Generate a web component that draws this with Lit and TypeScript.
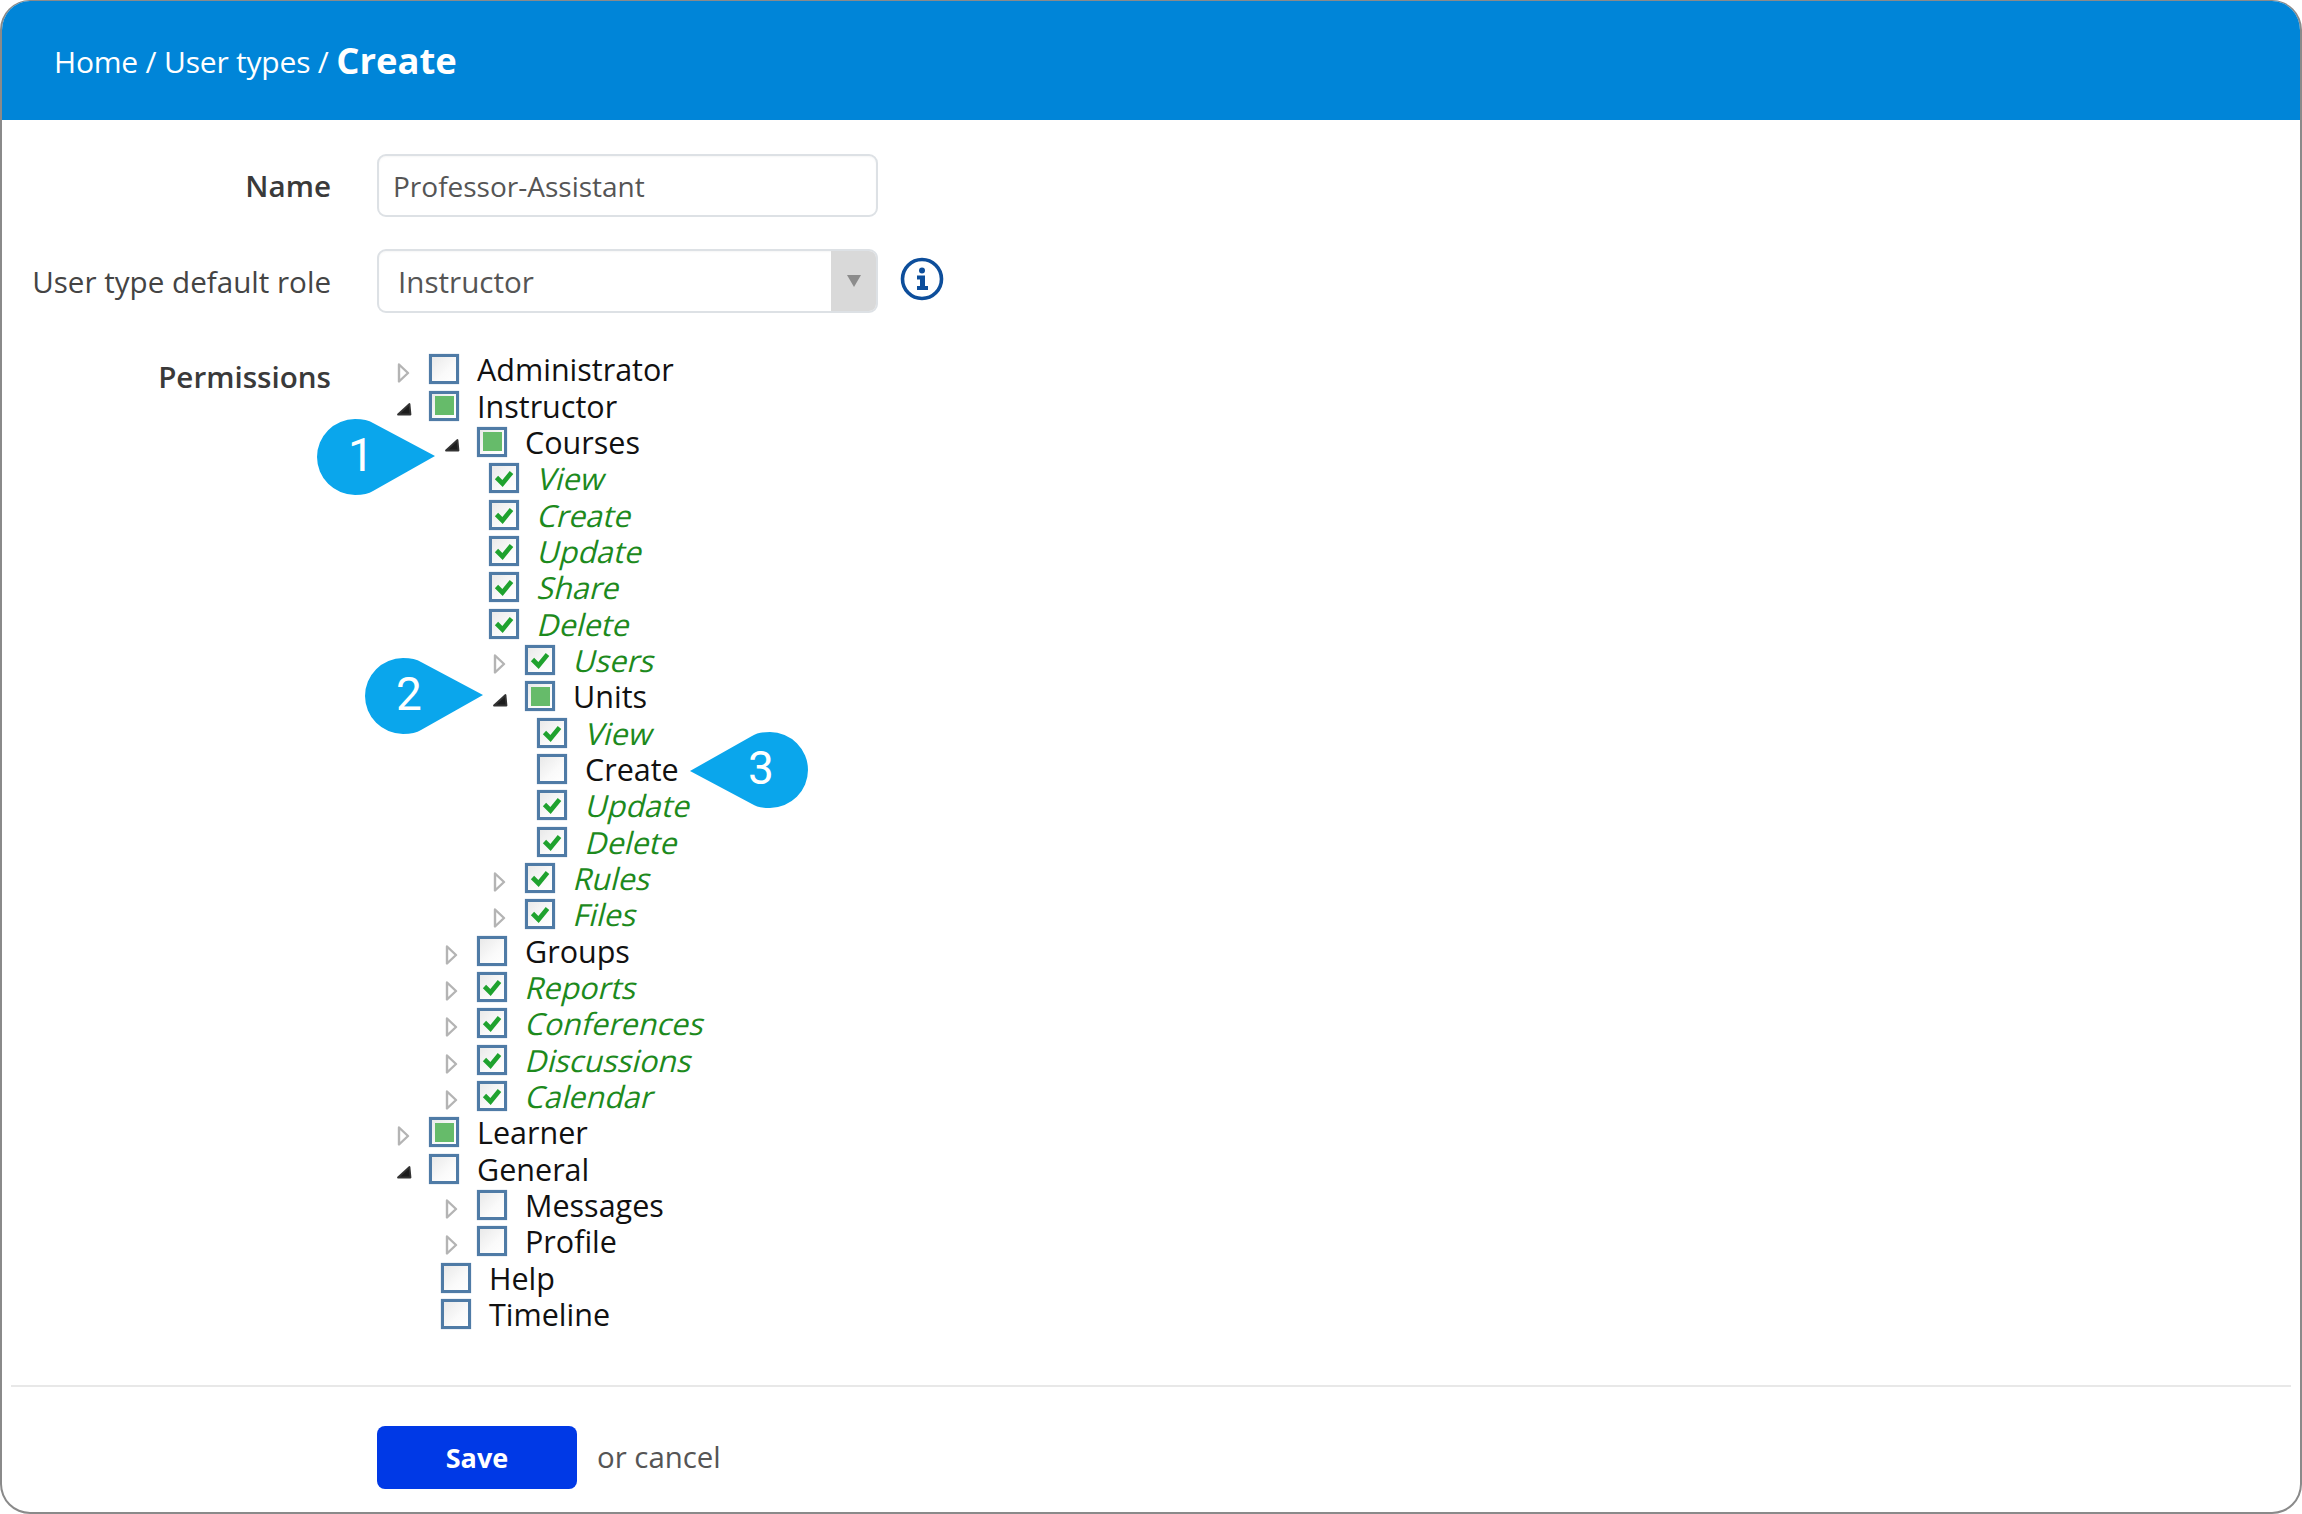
import { LitElement, html, css, svg, nothing } from "lit";
import { customElement } from "lit/decorators.js";

type State = "none" | "partial" | "checked";
interface Node {
  label: string;
  state: State;
  arrow?: "open" | "closed";
  kids?: Node[];
}

const leaf = (label: string, state: State = "checked"): Node => ({ label, state });
const closed = (label: string, state: State): Node => ({ label, state, arrow: "closed" });
const open = (label: string, state: State, kids: Node[]): Node => ({ label, state, arrow: "open", kids });

const TREE: Node[] = [
  closed("Administrator", "none"),
  open("Instructor", "partial", [
    open("Courses", "partial", [
      leaf("View"),
      leaf("Create"),
      leaf("Update"),
      leaf("Share"),
      leaf("Delete"),
      closed("Users", "checked"),
      open("Units", "partial", [
        leaf("View"),
        leaf("Create", "none"),
        leaf("Update"),
        leaf("Delete"),
      ]),
      closed("Rules", "checked"),
      closed("Files", "checked"),
    ]),
    closed("Groups", "none"),
    closed("Reports", "checked"),
    closed("Conferences", "checked"),
    closed("Discussions", "checked"),
    closed("Calendar", "checked"),
  ]),
  closed("Learner", "partial"),
  open("General", "none", [
    closed("Messages", "none"),
    closed("Profile", "none"),
    leaf("Help", "none"),
    leaf("Timeline", "none"),
  ]),
];

const openArrow = svg`<path d="M12.5 1 L13.5 11.5 L1 11.5 Z" fill="#1c1c1c" stroke="#333" stroke-width="1.8" stroke-linejoin="round"/>`;
const closedArrow = svg`<path d="M2 1.5 L11 10 L2 18.5 Z" fill="#fff" stroke="#b4b4b4" stroke-width="2.4" stroke-linejoin="round"/>`;

@customElement("app-root")
export class AppRoot extends LitElement {
  static styles = css`
    :host {
      display: block;
      width: 2302px;
      height: 1514px;
      background: #fff;
      font-family: "Open Sans", "Liberation Sans", sans-serif;
    }
    .frame {
      position: relative;
      box-sizing: border-box;
      width: 100%;
      height: 100%;
      display: flex;
      flex-direction: column;
      background: #fff;
      border: 2px solid #8a8a8a;
      border-top-width: 1px;
      border-radius: 30px;
      overflow: hidden;
    }
    .header {
      height: 119px;
      background: #0085d8;
      color: #fff;
      display: flex;
      align-items: center;
      padding-left: 52px;
      font-size: 30px;
      letter-spacing: -0.2px;
      white-space: pre;
      flex: none;
    }
    .header span {
      position: relative;
      top: 1px;
    }
    .header b {
      font-size: 36.4px;
      font-weight: 700;
      letter-spacing: 0;
      position: relative;
      top: -1px;
    }
    .form {
      flex: 1;
      padding-top: 34px;
      display: flex;
      flex-direction: column;
    }
    .field {
      display: grid;
      grid-template-columns: 329px 501px auto;
      column-gap: 46px;
      align-items: center;
      height: 63px;
      margin-bottom: 32px;
    }
    .label {
      text-align: right;
      font-size: 29.6px;
      color: #444;
    }
    .label.strong {
      font-weight: 600;
      color: #3a3a3a;
    }
    .input,
    .select {
      box-sizing: border-box;
      width: 501px;
      height: 63px;
      border: 2px solid #dde1e5;
      border-radius: 9px;
      background: #fff;
      font: inherit;
      font-size: 28px;
      color: #555;
      box-shadow: inset 0 1px 2px rgba(0, 0, 0, 0.04);
    }
    .input {
      padding: 0 14px;
      outline: none;
    }
    .select {
      display: flex;
      align-items: center;
      justify-content: space-between;
      height: 64px;
      padding-left: 19px;
      font-size: 29.6px;
      overflow: hidden;
    }
    .caret {
      width: 45px;
      align-self: stretch;
      background: #d9d9d9;
      display: flex;
      align-items: center;
      justify-content: center;
    }
    .info {
      display: block;
      margin: -4px 0 0 -24px;
    }
    .perm {
      display: grid;
      grid-template-columns: 329px auto;
      column-gap: 46px;
      margin-top: 7px;
    }
    .perm .label {
      line-height: 36px;
      margin-top: 8px;
    }
    .tree {
      padding-left: 20px;
      color: #111;
      font-size: 30.5px;
    }
    ul {
      list-style: none;
      margin: 0;
      padding: 0;
    }
    ul ul {
      padding-left: 48px;
    }
    .row {
      display: flex;
      align-items: center;
      height: 36.35px;
      white-space: nowrap;
    }
    .arrow {
      width: 32px;
      flex: none;
      display: flex;
      align-items: center;
      padding-top: 8px;
      box-sizing: border-box;
      height: 100%;
      filter: blur(0.4px);
    }
    .spacer {
      width: 0;
      margin-left: -4px;
      flex: none;
    }
    .cb {
      box-sizing: border-box;
      width: 30px;
      height: 30px;
      flex: none;
      border: 3px solid #4f7ba6;
      background: linear-gradient(135deg, #e9e9e9, #fafafa 60%, #fff);
      box-shadow: 0 0 1px rgba(79, 123, 166, 0.6);
      display: flex;
      align-items: center;
      justify-content: center;
      filter: blur(0.4px);
    }
    .cb i {
      display: block;
      width: 19px;
      height: 19px;
      background: #66bb6a;
    }
    .text {
      margin-left: 18px;
      line-height: 36px;
    }
    .text.on {
      display: inline-block;
      margin-left: 20px;
      color: #1d8a1d;
      transform: skewX(-14deg);
    }
    .footer {
      margin: 0 9px;
      border-top: 2px solid #e8e8e8;
      height: 127px;
      flex: none;
      box-sizing: border-box;
      padding: 39px 0 0 366px;
      display: flex;
      align-items: flex-start;
      gap: 20px;
    }
    .save {
      width: 200px;
      height: 63px;
      border: none;
      border-radius: 8px;
      background: #0039e6;
      color: #fff;
      font: inherit;
      font-size: 27px;
      font-weight: 700;
    }
    .cancel {
      line-height: 63px;
      font-size: 29.4px;
      color: #555;
    }
    .pin-wrap {
      position: absolute;
      width: 120px;
      height: 78px;
      display: flex;
      align-items: center;
      color: #fff;
      font-family: Roboto, "Liberation Sans", sans-serif;
      font-size: 46px;
    }
    .pin-wrap svg {
      position: absolute;
      left: 0;
      top: 0;
    }
    .pin-wrap span {
      position: relative;
      top: -2px;
      left: 8px;
      width: 76px;
      text-align: center;
    }
    .pin-wrap.flip span {
      left: -9px;
      margin-left: 43px;
    }
    .c1 { left: 313px; top: 417px; }
    .c2 { left: 361px; top: 656px; }
    .c3 { left: 687px; top: 730px; }
  `;

  private box(state: State) {
    if (state === "partial") return html`<span class="cb"><i></i></span>`;
    if (state === "checked")
      return html`<span class="cb"><svg width="20" height="18" viewBox="0 0 20 18"><path d="M2.5 8.5 L8.5 14.5 L17.5 3.5" fill="none" stroke="#1fa22e" stroke-width="4.6"/></svg></span>`;
    return html`<span class="cb"></span>`;
  }

  private node(n: Node): unknown {
    return html`<li>
      <div class="row">
        ${n.arrow
          ? html`<span class="arrow">${n.arrow === "open"
              ? html`<svg width="15" height="13" viewBox="0 0 15 13">${openArrow}</svg>`
              : html`<svg width="14" height="20" viewBox="0 0 14 20">${closedArrow}</svg>`}</span>`
          : html`<span class="spacer"></span>`}
        ${this.box(n.state)}
        <span class="text ${n.state === "checked" ? "on" : ""}">${n.label}</span>
      </div>
      ${n.kids ? html`<ul>${n.kids.map((k) => this.node(k))}</ul>` : nothing}
    </li>`;
  }

  private pin(num: string, cls: string, flip: boolean) {
    return html`<div class="pin-wrap ${cls} ${flip ? "flip" : ""}">
      <svg width="120" height="78" viewBox="0 0 120 78">
        ${flip
          ? svg`<path d="M1 40 L63 5 Q69 1 81 1 A38 38 0 0 1 81 77 Q69 77 63 73 Z" fill="#0aa6ec"/>`
          : svg`<path d="M120 38 L58 73 Q52 77 40 77 A38 38 0 0 1 40 1 Q52 1 58 5 Z" fill="#0aa6ec"/>`}
      </svg>
      <span>${num}</span>
    </div>`;
  }

  render() {
    return html`<div class="frame">
      <div class="header"><span>Home / User types / </span><b>Create</b></div>
      <div class="form">
        <div class="field">
          <div class="label strong">Name</div>
          <input class="input" .value=${"Professor-Assistant"} />
        </div>
        <div class="field">
          <div class="label">User type default role</div>
          <div class="select">
            <span>Instructor</span>
            <span class="caret"><svg width="14" height="12" viewBox="0 0 14 12"><path d="M0 0 H14 L7 12 Z" fill="#8c8c8c"/></svg></span>
          </div>
          <svg class="info" width="44" height="44" viewBox="0 0 44 44">
            <circle cx="22" cy="22" r="19.5" fill="#fff" stroke="#0d4e9b" stroke-width="3.6"/>
            <circle cx="22" cy="13.5" r="3" fill="#0d4e9b"/>
            <path d="M17 18.5 H25 V29 H28 V33 H17 V29 H20 V22.5 H17 Z" fill="#0d4e9b"/>
          </svg>
        </div>
        <div class="perm">
          <div class="label strong">Permissions</div>
          <ul class="tree">
            ${TREE.map((n) => this.node(n))}
          </ul>
        </div>
      </div>
      <div class="footer">
        <button class="save">Save</button>
        <span class="cancel">or cancel</span>
      </div>
      ${this.pin("1", "c1", false)}
      ${this.pin("2", "c2", false)}
      ${this.pin("3", "c3", true)}
    </div>`;
  }
}
